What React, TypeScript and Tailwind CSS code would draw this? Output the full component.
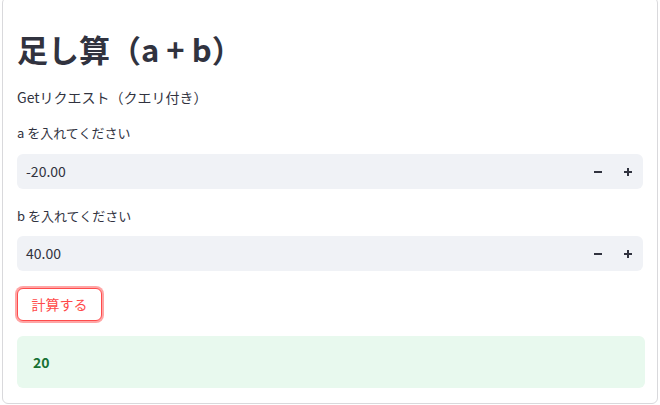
import React from 'react';

const font = { fontFamily: '"Noto Sans CJK JP", "Noto Sans", sans-serif' };

function Step({ value }: { value: string }) {
  return (
    <div className="flex h-[35px] items-center rounded-[6px] bg-[#f0f2f6]">
      <span className="flex-1 pl-[9px] text-[14px] text-[#31333f]">{value}</span>
      <div className="flex h-full items-center">
        <span className="flex h-full w-[30px] items-center justify-center">
          <svg width="8" height="8" viewBox="0 0 8 8">
            <path d="M0 4H8" stroke="#31333f" strokeWidth="2" />
          </svg>
        </span>
        <span className="flex h-full w-[30px] items-center justify-center">
          <svg width="8" height="8" viewBox="0 0 8 8">
            <path d="M0 4H8M4 0V8" stroke="#31333f" strokeWidth="2" />
          </svg>
        </span>
      </div>
    </div>
  );
}

export default function App() {
  return (
    <div className="h-[405px] w-[660px] overflow-hidden bg-white" style={font}>
      <div className="ml-[2px] mt-[-3px] h-[407px] w-[656px] rounded-[6px] border border-[#d9d9dc] px-[14px] pt-[32px]">
        <h1 className="h-[38px] text-[31px] font-bold leading-[38px] text-[#31333f]">足し算（a + b）</h1>
        <p className="mt-[19px] h-[20px] text-[14px] leading-[20px] text-[#31333f]">Getリクエスト（クエリ付き）</p>
        <div className="mt-[16px] h-[20px] text-[13px] leading-[20px] text-[#31333f]">a を入れてください</div>
        <div className="mt-[11px]">
          <Step value="-20.00" />
        </div>
        <div className="mt-[17px] h-[20px] text-[13px] leading-[20px] text-[#31333f]">b を入れてください</div>
        <div className="mt-[10px]">
          <Step value="40.00" />
        </div>
        <button className="mt-[17px] flex h-[33px] w-[85px] items-center justify-center rounded-[6px] border border-[#ff4b4b] bg-white text-[14px] text-[#ff4b4b] shadow-[0_0_0_2px_rgba(255,75,75,0.5)]">
          計算する
        </button>
        <div className="mt-[15px] flex h-[52px] w-[628px] items-center rounded-[6px] bg-[#e8f9ee] pl-[16px] text-[14px] font-semibold text-[#177233]">
          20
        </div>
      </div>
    </div>
  );
}
